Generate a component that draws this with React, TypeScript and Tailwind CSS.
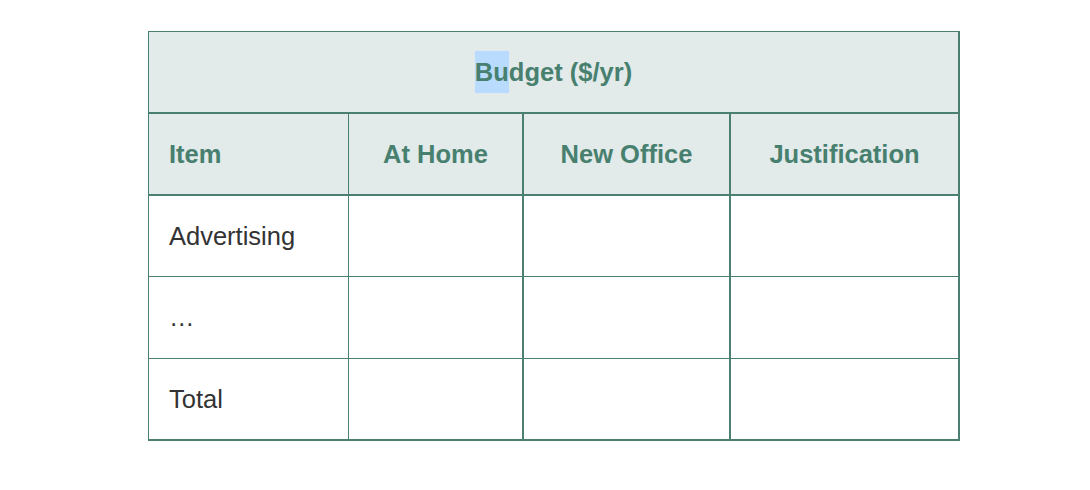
import React from 'react';

interface Column {
  label: string;
  width: string;
  border: string;
  align: string;
}

const columns: Column[] = [
  { label: 'Item', width: 'w-[200px]', border: 'border-r', align: 'justify-start pl-5' },
  { label: 'At Home', width: 'w-[175px]', border: 'border-r-2', align: 'justify-center' },
  { label: 'New Office', width: 'w-[207px]', border: 'border-r-2', align: 'justify-center' },
  { label: 'Justification', width: 'w-[229px]', border: 'border-r-2', align: 'justify-center' },
];

const rows = [
  { item: 'Advertising', h: 'h-[81px]', bottom: 'border-b' },
  { item: '…', h: 'h-[82px]', bottom: 'border-b' },
  { item: 'Total', h: 'h-[82px]', bottom: 'border-b-2' },
];

const App: React.FC = () => {
  return (
    <div className="w-[1090px] h-[490px] bg-white font-['Liberation_Sans',Arial,sans-serif]">
      <div className="pt-[31px] pl-[148px]">
        <div className="w-[812px] border-t border-l border-[#4a7f72]">
          <div className="flex h-[82px] items-center justify-center border-r-2 border-b-2 border-[#4a7f72] bg-[#e3eaea] text-[25.5px] font-bold text-[#47806f]">
            <span>
              <span className="inline-block bg-[#b9dcfe] leading-[42px]">Bu</span>dget ($/yr)
            </span>
          </div>
          <div className="flex h-[82px] bg-[#e3eaea]">
            {columns.map((c) => (
              <div
                key={c.label}
                className={`flex items-center ${c.width} ${c.border} ${c.align} border-b-2 border-[#4a7f72] text-[25.5px] font-bold text-[#47806f]`}
              >
                {c.label}
              </div>
            ))}
          </div>
          {rows.map((r) => (
            <div key={r.item} className={`flex ${r.h}`}>
              {columns.map((c, i) => (
                <div
                  key={c.label}
                  className={`flex items-center ${c.width} ${c.border} ${r.bottom} border-[#4a7f72] pl-5 text-[25.5px] text-[#333333]`}
                >
                  {i === 0 ? r.item : ''}
                </div>
              ))}
            </div>
          ))}
        </div>
      </div>
    </div>
  );
};

export default App;
